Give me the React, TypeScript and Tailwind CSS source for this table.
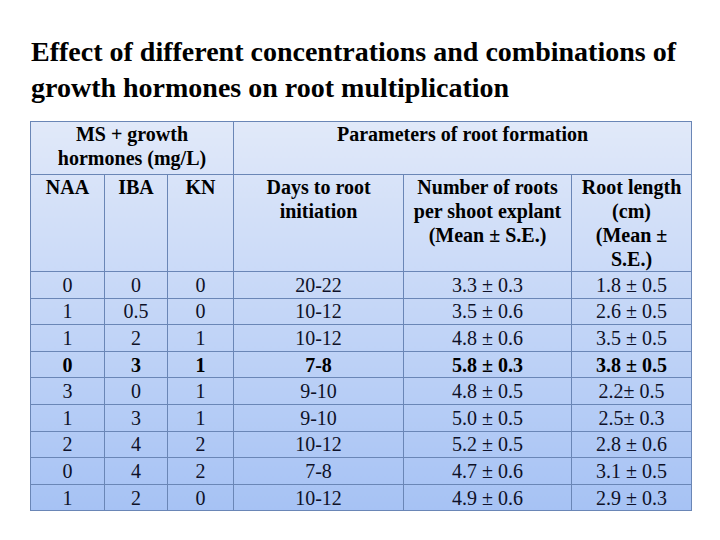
import React from "react";

const rows: { c: string[]; bold?: boolean }[] = [
  { c: ["0", "0", "0", "20-22", "3.3 ± 0.3", "1.8 ± 0.5"] },
  { c: ["1", "0.5", "0", "10-12", "3.5 ± 0.6", "2.6 ± 0.5"] },
  { c: ["1", "2", "1", "10-12", "4.8 ± 0.6", "3.5 ± 0.5"] },
  { c: ["0", "3", "1", "7-8", "5.8 ± 0.3", "3.8 ± 0.5"], bold: true },
  { c: ["3", "0", "1", "9-10", "4.8 ± 0.5", "2.2± 0.5"] },
  { c: ["1", "3", "1", "9-10", "5.0 ± 0.5", "2.5± 0.3"] },
  { c: ["2", "4", "2", "10-12", "5.2 ± 0.5", "2.8 ± 0.6"] },
  { c: ["0", "4", "2", "7-8", "4.7 ± 0.6", "3.1 ± 0.5"] },
  { c: ["1", "2", "0", "10-12", "4.9 ± 0.6", "2.9 ± 0.3"] },
];

export default function App() {
  return (
    <div
      className="w-[720px] h-[540px] bg-white overflow-hidden text-black"
      style={{ fontFamily: '"Liberation Serif", "Times New Roman", serif' }}
    >
      <div className="pt-[34px] pl-[31px] text-[28px] leading-[36px] font-bold whitespace-nowrap">
        Effect of different concentrations and combinations of
        <br />
        growth hormones on root multiplication
      </div>
      <table className="mt-[15px] ml-[30px] w-[661px] table-fixed border-collapse border border-[#5f7aa8] bg-linear-to-b from-[#e1e9f9] to-[#a6c2f4] text-[20px] leading-[24px] text-[#0e1128]">
        <colgroup>
          <col className="w-[74px]" />
          <col className="w-[63px]" />
          <col className="w-[66px]" />
          <col className="w-[170px]" />
          <col className="w-[168px]" />
          <col className="w-[120px]" />
        </colgroup>
        <thead>
          <tr className="h-[53px]">
            <th colSpan={3} className="border border-[#6a86b6] align-top p-0 font-bold text-black">
              MS + growth
              <br />
              hormones (mg/L)
            </th>
            <th colSpan={3} className="border border-[#6a86b6] align-top p-0 font-bold text-black">
              Parameters of root formation
            </th>
          </tr>
          <tr className="h-[96px]">
            <th className="border border-[#6a86b6] align-top p-0 font-bold text-black">NAA</th>
            <th className="border border-[#6a86b6] align-top p-0 font-bold text-black">IBA</th>
            <th className="border border-[#6a86b6] align-top p-0 font-bold text-black">KN</th>
            <th className="border border-[#6a86b6] align-top p-0 font-bold text-black">
              Days to root
              <br />
              initiation
            </th>
            <th className="border border-[#6a86b6] align-top p-0 font-bold text-black">
              Number of roots
              <br />
              per shoot explant
              <br />
              (Mean ± S.E.)
            </th>
            <th className="border border-[#6a86b6] align-top p-0 font-bold text-black">
              Root length
              <br />
              (cm)
              <br />
              (Mean ±
              <br />
              S.E.)
            </th>
          </tr>
        </thead>
        <tbody>
          {rows.map((r, i) => (
            <tr key={i} className="h-[26.6px]">
              {r.c.map((v, j) => (
                <td
                  key={j}
                  className={
                    r.bold
                      ? "border border-[#6a86b6] text-center align-middle p-0 font-bold text-black"
                      : "border border-[#6a86b6] text-center align-middle p-0 font-normal"
                  }
                >
                  {v}
                </td>
              ))}
            </tr>
          ))}
        </tbody>
      </table>
    </div>
  );
}
